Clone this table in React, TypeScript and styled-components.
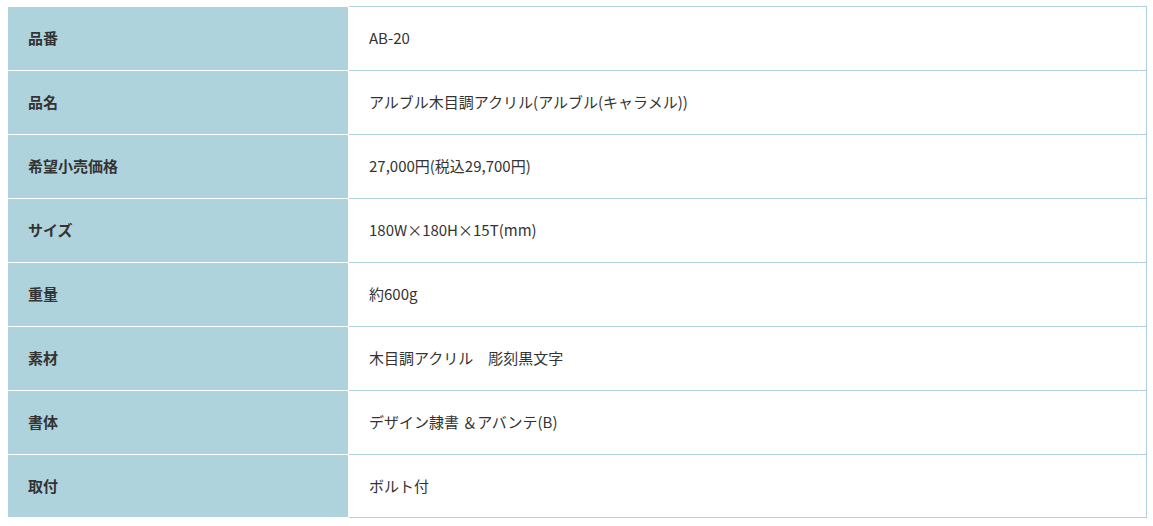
import styled, { createGlobalStyle } from "styled-components";

type Spec = {
  label: string;
  value: string;
};

const SPECS: Spec[] = [
  { label: "品番", value: "AB-20" },
  { label: "品名", value: "アルブル木目調アクリル(アルブル(キャラメル))" },
  { label: "希望小売価格", value: "27,000円(税込29,700円)" },
  { label: "サイズ", value: "180W×180H×15T(mm)" },
  { label: "重量", value: "約600g" },
  { label: "素材", value: "木目調アクリル　彫刻黒文字" },
  { label: "書体", value: "デザイン隷書 ＆アバンテ(B)" },
  { label: "取付", value: "ボルト付" },
];

const COLORS = {
  HEAD_BG: "#afd3dc",
  BORDER: "#afd3dc",
  TEXT: "#333333",
  WHITE: "#ffffff",
};

const GlobalStyle = createGlobalStyle`
  html, body {
    margin: 0;
    padding: 0;
    background: ${COLORS.WHITE};
  }
  body {
    font-family: "Noto Sans CJK JP", "Noto Sans", sans-serif;
    color: ${COLORS.TEXT};
  }
`;

export default function App() {
  return (
    <>
      <GlobalStyle />
      <Wrapper>
        <SpecTable>
          <tbody>
            {SPECS.map((spec, index) => (
              <SpecRow key={spec.label} $last={index === SPECS.length - 1}>
                <HeadCell>{spec.label}</HeadCell>
                <ValueCell>{spec.value}</ValueCell>
              </SpecRow>
            ))}
          </tbody>
        </SpecTable>
      </Wrapper>
    </>
  );
}

const Wrapper = styled.div`
  padding: 6px 6px 0 7px;
`;

const SpecTable = styled.table`
  width: 1140px;
  border-collapse: separate;
  border-spacing: 0;
  table-layout: fixed;
`;

const SpecRow = styled.tr<{ $last: boolean }>`
  height: 64px;

  th,
  td {
    border-bottom: ${({ $last }) => ($last ? "1px solid" : "0")};
  }

  th {
    border-bottom-color: ${COLORS.WHITE};
  }

  td {
    border-bottom-color: ${COLORS.BORDER};
  }
`;

const HeadCell = styled.th`
  width: 342px;
  box-sizing: border-box;
  padding: 0 0 1px 20px;
  background: ${COLORS.HEAD_BG};
  border-top: 1px solid ${COLORS.WHITE};
  border-left: 1px solid ${COLORS.WHITE};
  border-right: 1px solid ${COLORS.WHITE};
  text-align: left;
  vertical-align: middle;
  font-size: 15px;
  font-weight: 700;
  line-height: 22px;
  color: ${COLORS.TEXT};
`;

const ValueCell = styled.td`
  padding: 0 0 1px 20px;
  border-top: 1px solid ${COLORS.BORDER};
  border-right: 1px solid ${COLORS.BORDER};
  vertical-align: middle;
  font-size: 15px;
  font-weight: 400;
  line-height: 22px;
  color: ${COLORS.TEXT};
`;
